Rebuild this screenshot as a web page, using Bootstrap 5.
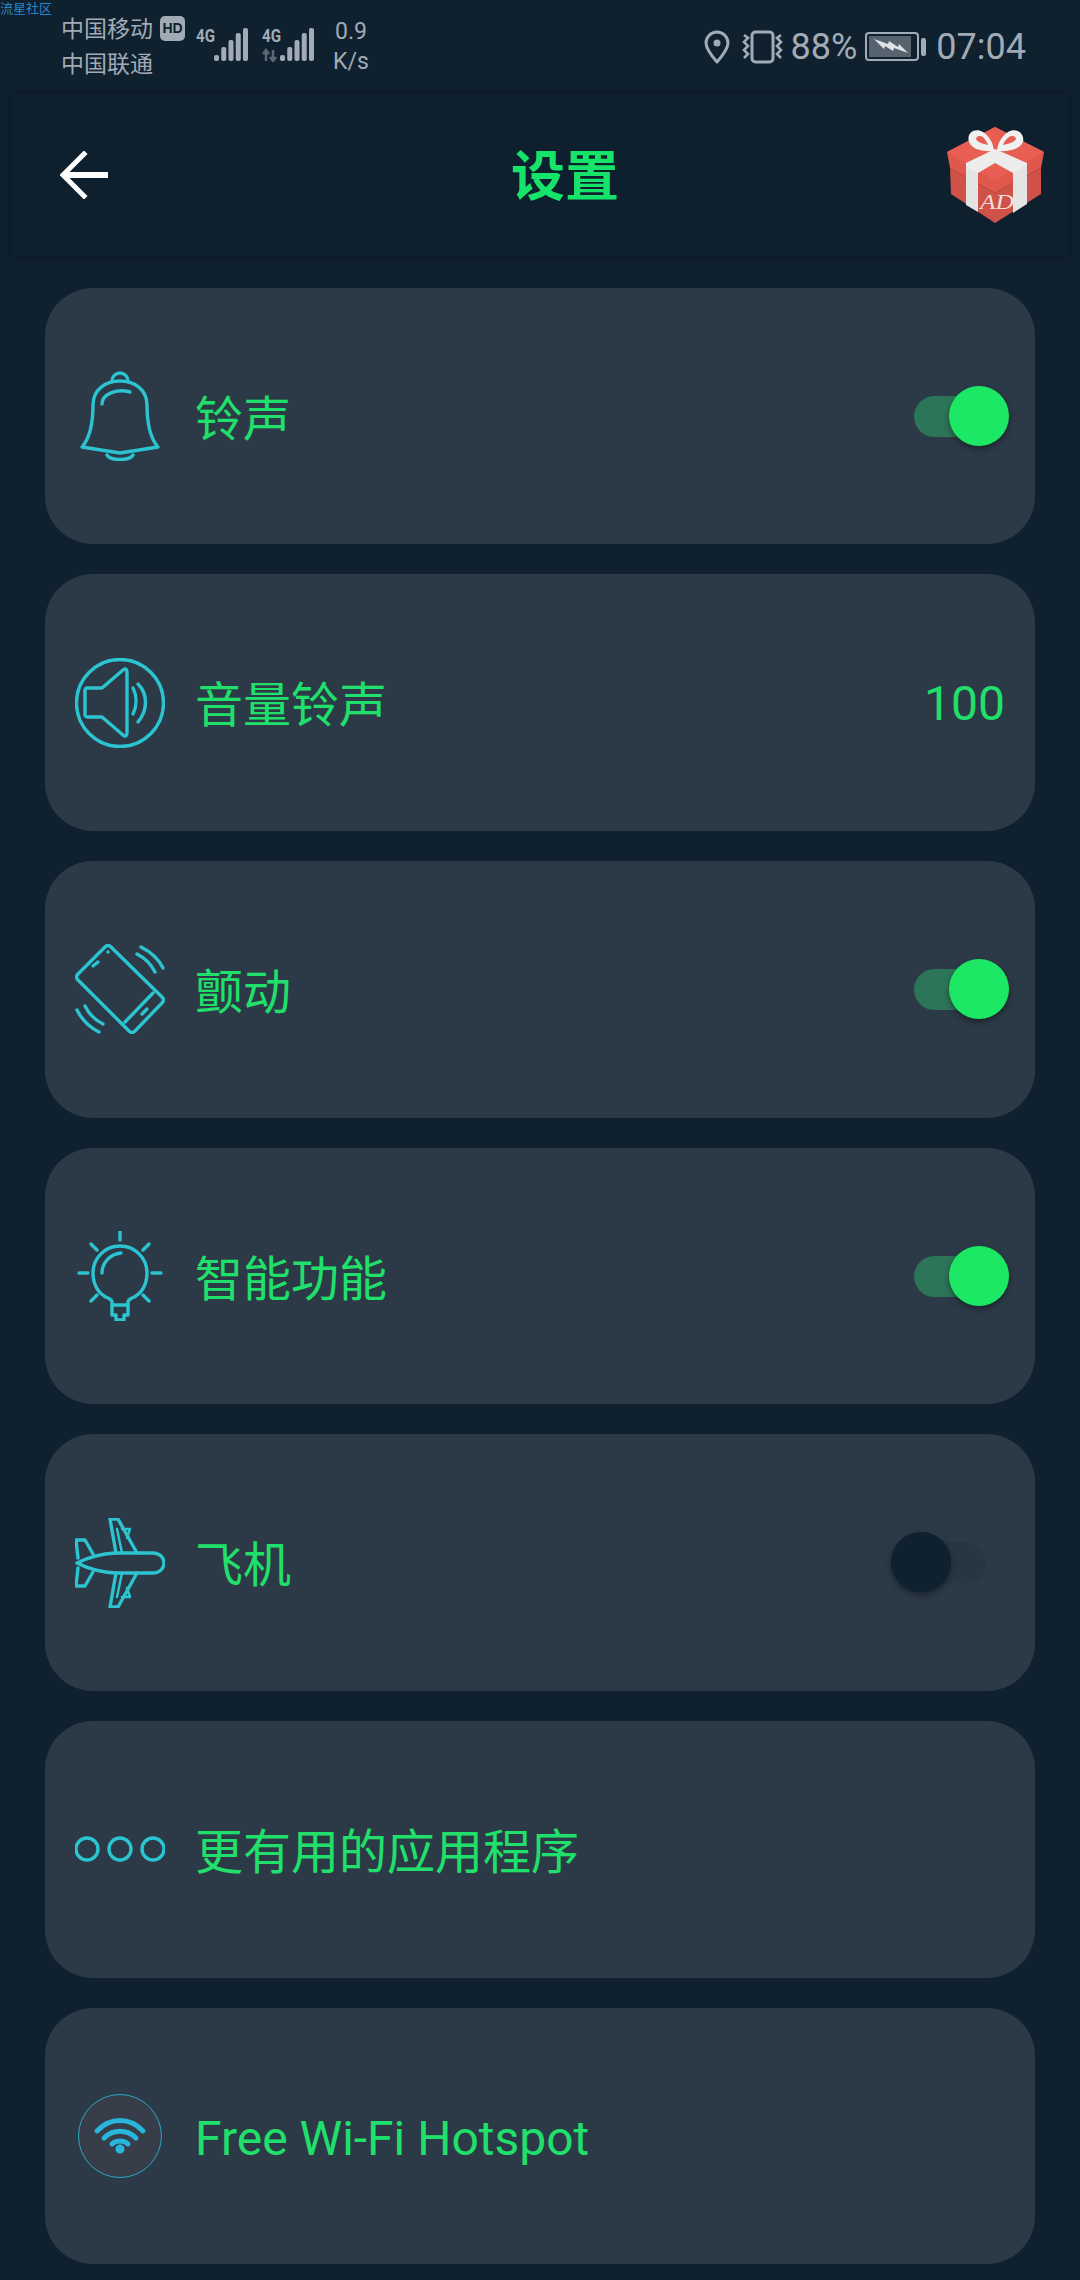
<!DOCTYPE html>
<html lang="zh">
<head>
  <meta charset="UTF-8" />
  <meta name="viewport" content="width=device-width, initial-scale=1" />
  <title>设置</title>
  <link href="https://cdn.jsdelivr.net/npm/bootstrap@5.3.0/dist/css/bootstrap.min.css" rel="stylesheet" />
  <style>
    html, body { background: #0f202f; }
    body { font-family: "Noto Sans CJK SC", "Noto Sans", sans-serif; min-height: 2280px; position: relative; }

    /* status bar */
    .watermark { position: absolute; left: 0; top: 0; font-size: 13px; line-height: 16px; color: #2a86c8; }
    .statusbar { height: 93px; padding: 10px 54px 0 61px; color: #a1abb5; }
    .carrier { font-size: 23px; line-height: 35px; width: 99px; white-space: nowrap; }
    .hd-tag { width: 25px; height: 25px; background: #a1abb5; color: #0f202f; border-radius: 5px; font: 700 14px/25px "Liberation Sans", sans-serif; text-align: center; margin-top: 6px; }
    .net-wrap { gap: 14px; margin-left: 11px; margin-top: 8px; }
    .speed { font: 23px/30px Roboto, sans-serif; width: 40px; text-align: center; margin-left: 17px; margin-top: 7px; }
    .sb-right { font: 36px/1 Roboto, sans-serif; margin-top: 19px; }
    .sig-text { font: 700 19px Roboto, sans-serif; fill: #a1abb5; }

    /* header */
    .topbar { height: 164px; margin: 0 12px; background: #0e1f2d; box-shadow: 0 0 7px rgba(0, 0, 0, .3); padding-left: 48px; }
    .topbar-title { font-size: 54px; font-weight: 700; line-height: 1; color: #16e46a; margin-left: 403px; padding-bottom: 5px; }
    .gift { margin-right: 24px; margin-left: auto; }

    /* rows */
    .settings { margin: 30.8px 45px 0; gap: 30px; }
    .setting-row { height: 256.67px; background: #2c3a47; border-radius: 48px; padding-left: 30px; color: #20e06b; font-size: 48px; line-height: 1; }
    .setting-label { margin-left: 30px; padding-bottom: 3px; }
    .row-ico { width: 90px; height: 90px; flex: none; fill: none; stroke: #2bc4d0; stroke-width: 3.4; stroke-linecap: round; stroke-linejoin: round; }
    .setting-label.latin { font-family: Roboto, sans-serif; padding-bottom: 0; padding-top: 5px; }
    .val { font-family: Roboto, sans-serif; margin-left: auto; margin-right: 30px; padding-top: 2px; }

    /* toggles */
    .tgl { position: relative; width: 72px; height: 41px; border-radius: 21px; margin-left: auto; margin-right: 49px; }
    .tgl::after { content: ""; position: absolute; top: -10px; width: 60px; height: 60px; border-radius: 50%; box-shadow: 0 3px 6px rgba(0, 0, 0, .4); }
    .tgl-on { background: #2d7558; }
    .tgl-on::after { left: 35px; background: #1ce865; }
    .tgl-off { background: #283643; }
    .tgl-off::after { left: -23px; background: #0f202f; }
  </style>
</head>
<body>

  <div class="watermark">流星社区</div>

  <!-- status bar -->
  <div class="statusbar d-flex align-items-start">
    <div class="carrier">中国移动<br />中国联通</div>
    <div class="hd-tag">HD</div>
    <div class="net-wrap d-flex">
      <svg width="52" height="44" viewBox="0 -8 52 44">
        <text class="sig-text" x="0" y="16" textLength="19" lengthAdjust="spacingAndGlyphs">4G</text>
        <g fill="#a1abb5">
          <rect x="18" y="29" width="5" height="6" rx="2" />
          <rect x="25.250" y="21" width="5" height="14" rx="2" />
          <rect x="32.500" y="14" width="5" height="21" rx="2" />
          <rect x="39.750" y="7" width="5" height="28" rx="2" />
          <rect x="47" y="2" width="5" height="33" rx="2" />
        </g>
      </svg>
      <svg width="52" height="44" viewBox="0 -8 52 44">
        <text class="sig-text" x="0" y="16" textLength="19" lengthAdjust="spacingAndGlyphs">4G</text>
        <path d="M4 24v11M1 28l3-4 3 4M11 35V24M8 31l3 4 3-4" stroke="#5b6874" stroke-width="2.500" fill="none" />
        <g fill="#a1abb5">
          <rect x="18" y="29" width="5" height="6" rx="2" />
          <rect x="25.250" y="21" width="5" height="14" rx="2" />
          <rect x="32.500" y="14" width="5" height="21" rx="2" />
          <rect x="39.750" y="7" width="5" height="28" rx="2" />
          <rect x="47" y="2" width="5" height="33" rx="2" />
        </g>
      </svg>
    </div>
    <div class="speed">0.9<br />K/s</div>

    <div class="sb-right d-flex align-items-center ms-auto">
      <svg width="26" height="34" viewBox="0 0 26 34" fill="none" stroke="#a1abb5" stroke-width="3">
        <path d="M13 32C6 24 2 18 2 13a11 11 0 0 1 22 0c0 5-4 11-11 19Z" stroke-linejoin="round" />
        <circle cx="13" cy="13" r="3.500" fill="#a1abb5" stroke="none" />
      </svg>
      <svg style="margin-left:11px" width="43" height="34" viewBox="0 0 43 34" fill="none" stroke="#a1abb5">
        <rect x="11" y="2" width="21" height="30" rx="3.500" stroke-width="3" />
        <path d="M3 5l4 3-4 4 4 4-4 4 4 4-4 4M40 5l-4 3 4 4-4 4 4 4-4 4 4 4" stroke-width="2.600" />
      </svg>
      <span style="margin-left:7px">88%</span>
      <svg style="margin-left:8px" width="61" height="30" viewBox="0 0 61 30">
        <rect x="1" y="1" width="52" height="27" rx="3" fill="none" stroke="#a1abb5" stroke-width="2" />
        <rect x="4" y="4" width="42" height="21" fill="#56636f" />
        <path d="M9 7 23 12 24 9 33 15 34 12 43 21 29 16 28 19 20 14 19 17Z" fill="#dfe3e7" />
        <rect x="56" y="6" width="5" height="18" rx="2" fill="#a1abb5" />
      </svg>
      <span style="margin-left:10px">07:04</span>
    </div>
  </div>

  <!-- header -->
  <div class="topbar d-flex align-items-center">
    <svg width="48" height="48" viewBox="0 0 48 48" fill="none" stroke="#fff" stroke-linecap="square">
      <path d="M5 24H46" stroke-width="6" />
      <path d="M24 3 3 24l21 21" stroke-width="5" />
    </svg>
    <div class="topbar-title">设置</div>
    <svg class="gift" width="97" height="96" viewBox="0 0 97 96">
      <path d="M3 41 48 66 94 41V67L48 96 4 67Z" fill="#cf5147" />
      <path d="M48 0 97 25 94 41 48 66 3 41 0 25Z" fill="#e0574c" />
      <path d="M48 0 97 25 48 54 0 25Z" fill="#e85e52" />
      <path d="M19 36 31 44V85L19 78ZM66 44 80 36V77L66 86Z" fill="#e4e4e4" />
      <path d="M19 36 48 22 80 36V38L66 46 48 36 31 46 19 40Z" fill="#ececec" />
      <path d="M47 24C38 25 25 23 22 15 19 6 28 0 36 5 42 9 46 15 47 24ZM50 24C59 25 73 23 76 15 78 6 69 0 61 5 55 9 51 15 50 24Z" fill="#f0f0f0" />
      <path d="M41 18C36 17 30 15 29 12 29 9 33 8 36 10 38 12 40 15 41 18ZM56 18C61 17 68 15 69 12 69 9 65 8 62 10 59 12 57 15 56 18Z" fill="#e85e52" />
      <text x="33" y="82" textLength="34" lengthAdjust="spacingAndGlyphs" font-family="Liberation Serif, serif" font-style="italic" font-size="20" fill="#f3ddd8">AD</text>
    </svg>
  </div>

  <!-- settings list -->
  <div class="settings d-flex flex-column">

    <div class="setting-row d-flex align-items-center">
      <svg class="row-ico" viewBox="0 0 90 90">
        <path d="M37 10a8 8 0 1 1 16 0" />
        <path d="M7 76C14 68 18 56 18 34 18 19 30 10 45 10S72 19 72 34C72 56 76 68 83 76L45 82Z" />
        <path d="M32 84C36 90 54 90 58 84" />
        <path d="M27 33C27 24 40 17 55 21" />
      </svg>
      <span class="setting-label">铃声</span>
      <div class="tgl tgl-on"></div>
    </div>

    <div class="setting-row d-flex align-items-center">
      <svg class="row-ico" viewBox="0 0 90 90">
        <circle cx="45" cy="45" r="43.500" />
        <path d="M12 30H27L48 12C50 10 52 11 52 14V75C52 78 50 79 48 77L27 59H12C11 59 10 58 10 57V32C10 31 11 30 12 30Z" />
        <path d="M58 30C62 38 62 48 58 56M63 26C73 36 73 52 63 64" />
      </svg>
      <span class="setting-label">音量铃声</span>
      <span class="val">100</span>
    </div>

    <div class="setting-row d-flex align-items-center">
      <svg class="row-ico" viewBox="0 0 90 90">
        <path d="M30 3C32 1 34 1 36 3L87 53C89 55 89 57 87 59L60 87C58 89 56 89 54 87L3 36C1 34 1 32 3 30Z" />
        <path d="M78 49 50 78" />
        <path d="M67 70 72 65M18 22 23 18M33 8H33.100" />
        <path d="M62 10C70 14 76 20 80 28M66 3C76 8 83 14 88 24" />
        <path d="M10 62C14 70 20 76 28 80M2 66C7 76 14 83 24 88" />
      </svg>
      <span class="setting-label">颤动</span>
      <div class="tgl tgl-on"></div>
    </div>

    <div class="setting-row d-flex align-items-center">
      <svg class="row-ico" viewBox="0 0 90 90">
        <path d="M37 74V71C37 69 35 68 33 67 23 63 18 53 18 42A27 27 0 0 1 72 42C72 53 67 63 57 67 55 68 53 69 53 71V74" />
        <path d="M37 74H53V84H49V89H41V84H37Z" />
        <path d="M27 42C27 32 35 23 46 22" />
        <path d="M45 1V9M4 42H13M77 42H86M16 13 22 19M74 13 68 19M16 70 22 64M74 70 68 64" />
      </svg>
      <span class="setting-label">智能功能</span>
      <div class="tgl tgl-on"></div>
    </div>

    <div class="setting-row d-flex align-items-center">
      <svg class="row-ico" viewBox="0 0 90 90">
        <path d="M2 45C12 40 22 36 40 35H78C85 35 89 40 89 45S85 55 78 55H40C22 54 12 50 2 45Z" />
        <path d="M18 36 10 22H1L3 40M18 54 10 68H1L3 50" />
        <path d="M41 35 35 1H43L62 35M41 55 35 89H43L62 55" />
        <path d="M47 11H55L52 20M47 79H55L52 70M42 11 47 35M42 79 47 55" stroke-width="2.500" />
      </svg>
      <span class="setting-label">飞机</span>
      <div class="tgl tgl-off"></div>
    </div>

    <div class="setting-row d-flex align-items-center">
      <svg class="row-ico" viewBox="0 0 90 90">
        <circle cx="12" cy="45" r="11" />
        <circle cx="45" cy="45" r="11" />
        <circle cx="78" cy="45" r="11" />
      </svg>
      <span class="setting-label">更有用的应用程序</span>
    </div>

    <div class="setting-row d-flex align-items-center">
      <svg class="row-ico" viewBox="0 0 90 90">
        <circle cx="45" cy="45" r="41.500" fill="#373d49" stroke="#2aa7c4" stroke-width="1" />
        <g stroke="#27b5dc" stroke-width="5">
          <path d="M22 40C35 26 55 26 68 40M29 47C38 38 52 38 61 47M37 53C41 49 49 49 53 53" />
        </g>
        <circle cx="45" cy="58" r="4.500" fill="#27b5dc" stroke="none" />
      </svg>
      <span class="setting-label latin">Free Wi-Fi Hotspot</span>
    </div>

  </div>

  <script src="https://cdn.jsdelivr.net/npm/bootstrap@5.3.0/dist/js/bootstrap.bundle.min.js"></script>
</body>
</html>
